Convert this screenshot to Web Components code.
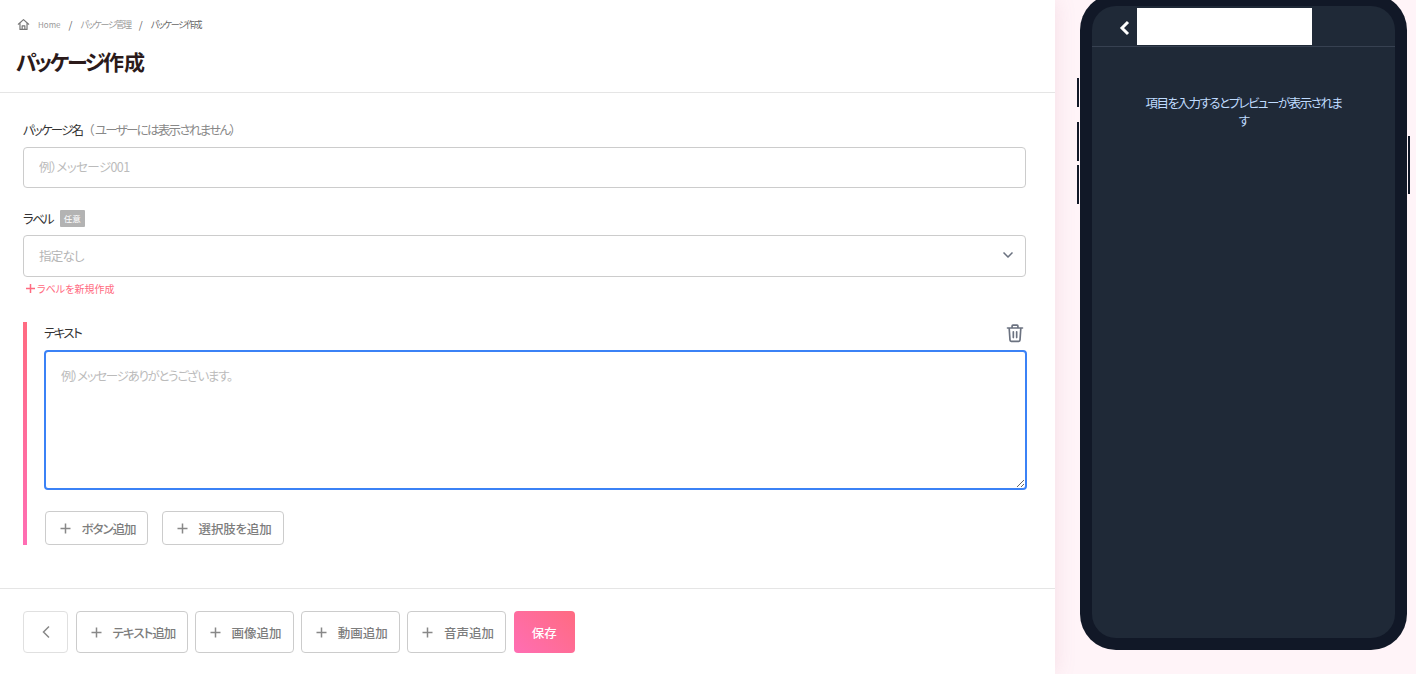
<!DOCTYPE html>
<html lang="ja">
<head>
<meta charset="utf-8">
<title>パッケージ作成</title>
<style>
  html, body { margin: 0; height: 100%; overflow: hidden; }
  body {
    font-family: "Noto Sans CJK JP", "Noto Sans", sans-serif;
    font-feature-settings: "palt";
    color: #333;
    background: #fff;
  }
</style>
</head>
<body>
<package-page></package-page>

<script>
const PLUS = `<svg width="11" height="11" viewBox="0 0 11 11" fill="none" stroke="currentColor" stroke-width="1.5"><path d="M5.5 .5v10M.5 5.500h10"/></svg>`;

class AddButton extends HTMLElement {
  constructor() {
    super();
    this.attachShadow({ mode: "open" }).innerHTML = `<style>
      :host { display: inline-flex; }
      button {
        display: flex;
        align-items: center;
        box-sizing: border-box;
        height: var(--btn-height, 42px);
        padding: 0 11.5px 0 14px;
        gap: 10.5px;
        background: #fff;
        border: 1px solid #ccc;
        border-radius: 4px;
        color: #7d7d7d;
        font: inherit;
        font-size: 12.5px;
        font-weight: 500;
        font-feature-settings: "palt";
        letter-spacing: var(--btn-spacing, 0);
        white-space: nowrap;
      }
      svg { flex: none; color: #888; }
    </style><button type="button">${PLUS}<slot></slot></button>`;
  }
}
customElements.define("add-button", AddButton);

class BreadCrumb extends HTMLElement {
  constructor() {
    super();
    this.attachShadow({ mode: "open" }).innerHTML = `<style>
      :host { display: flex; align-items: center; height: 16px; font-size: 9px; color: #999; }
      svg { margin: 0 8px 0 1px; }
      .home { font-size: 8px; }
      .sep { margin: 0 8px; color: #666; font-size: 10px; }
      .kana { letter-spacing: -1.3px; }
      .current { color: #666; }
    </style>
    <svg width="13" height="13" viewBox="0 0 24 24" fill="none" stroke="#777" stroke-width="2.2" stroke-linejoin="round" stroke-linecap="round"><path d="M2.500 11.500 12 3l9.500 8.500M5.500 9v12h13V9M9.500 21v-6.500h5V21"/></svg>
    <span class="home">Home</span><span class="sep">/</span><span class="kana">パッケージ管理</span><span class="sep">/</span><span class="kana current">パッケージ作成</span>`;
  }
}
customElements.define("bread-crumb", BreadCrumb);

class FormField extends HTMLElement {
  constructor() {
    super();
    this.attachShadow({ mode: "open" }).innerHTML = `<style>
      :host { display: block; }
      .label { display: flex; align-items: center; height: 20px; font-size: 12.5px; color: #333; }
      .note { color: #888; }
      .tag { box-sizing: border-box; width: 25px; margin-left: 7px; height: 17px; line-height: 17px; text-align: center; border-radius: 1px; background: #b3b3b3; color: #fff; font-size: 8.5px; }
      .control { margin-top: var(--control-gap, 8px); }
    </style>
    <div class="label"><slot name="label"></slot><span class="note"><slot name="note"></slot></span></div>
    <div class="control"><slot></slot></div>`;
    if (this.hasAttribute("optional")) {
      const tag = document.createElement("span");
      tag.className = "tag";
      tag.textContent = "任意";
      this.shadowRoot.querySelector(".label").appendChild(tag);
    }
  }
}
customElements.define("form-field", FormField);

class TextInput extends HTMLElement {
  constructor() {
    super();
    this.attachShadow({ mode: "open" }).innerHTML = `<style>
      :host { display: block; }
      input {
        display: block; box-sizing: border-box; width: 100%; height: 41px;
        padding: 0 15px 2px; border: 1px solid #ccc; border-radius: 4px; outline: 0;
        font: inherit; font-size: 12.5px; font-feature-settings: "palt"; letter-spacing: -.6px;
      }
      input::placeholder { color: #bbb; opacity: 1; }
    </style><input type="text" placeholder="${this.getAttribute("placeholder") || ""}">`;
  }
}
customElements.define("text-input", TextInput);

class SelectInput extends HTMLElement {
  constructor() {
    super();
    this.attachShadow({ mode: "open" }).innerHTML = `<style>
      :host { display: block; }
      .box {
        display: flex; align-items: center; justify-content: space-between; box-sizing: border-box;
        height: 42px; padding: 0 12px 2px 15px; border: 1px solid #ccc; border-radius: 4px;
        color: #b5b5b5; font-size: 12.5px; letter-spacing: -.8px;
      }
    </style>
    <div class="box"><slot></slot>
      <svg width="10" height="6" viewBox="0 0 10 6" fill="none" stroke="#6b7280" stroke-width="1.500"><path d="M.5 .5 5 5 9.500 .5"/></svg>
    </div>`;
  }
}
customElements.define("select-input", SelectInput);

class TextBlock extends HTMLElement {
  constructor() {
    super();
    this.attachShadow({ mode: "open" }).innerHTML = `<style>
      :host {
        display: block; box-sizing: border-box; height: 223px;
        padding-left: 17px; border-left: 4px solid;
        border-image: linear-gradient(180deg, #ff6b81, #ff6eb4) 1;
      }
      .head { display: flex; align-items: center; justify-content: space-between; box-sizing: border-box; height: 22px; padding-bottom: 2px; margin-bottom: 6px; font-size: 12.5px; color: #333; letter-spacing: -1.6px; }
      textarea {
        display: block; box-sizing: border-box; width: 983px; height: 140px; padding: 14px 15px;
        border: 2px solid #3b82f6; border-radius: 4px; outline: 0; resize: vertical;
        font: inherit; font-size: 12.5px; font-feature-settings: "palt"; letter-spacing: -1.3px;
      }
      textarea::placeholder { color: #bbb; opacity: 1; }
      .actions { display: flex; gap: 14px; margin: 21px 0 0 1px; --btn-height: 34px; }
      .actions add-button:first-child { --btn-spacing: -1px; }
      .actions add-button:last-child { --btn-spacing: -.2px; }
      svg.trash { margin: 2px 1px 0 0; }
    </style>
    <div class="head"><span>テキスト</span>
      <svg class="trash" width="20" height="20" viewBox="0 0 24 24" fill="none" stroke="#6b7280" stroke-width="2" stroke-linecap="round" stroke-linejoin="round"><path d="M3 6h18M8.500 6V3.500a1 1 0 0 1 1-1h5a1 1 0 0 1 1 1V6M5 6l1 14.500a1.500 1.500 0 0 0 1.500 1.500h9a1.500 1.500 0 0 0 1.500-1.500L19 6M10 10.500v7M14 10.500v7"/></svg>
    </div>
    <textarea placeholder="例）メッセージありがとうございます。"></textarea>
    <div class="actions"><add-button>ボタン追加</add-button><add-button>選択肢を追加</add-button></div>`;
  }
}
customElements.define("text-block", TextBlock);

class PhonePreview extends HTMLElement {
  constructor() {
    super();
    this.attachShadow({ mode: "open" }).innerHTML = `<style>
      :host {
        display: block; position: relative; box-sizing: border-box; width: 327px; height: 656px;
        margin: -6px 0 0 25px; padding: 12px; background: #111827; border-radius: 36px;
      }
      .screen { display: flex; flex-direction: column; height: 100%; background: #1f2937; border-radius: 24px; overflow: hidden; }
      .bar { display: flex; align-items: flex-end; flex: none; box-sizing: border-box; height: 41px; padding: 0 0 1px 27px; border-bottom: 1px solid #374151; }
      .bar svg { flex: none; margin: 0 7px 9px 0; }
      .title { width: 175px; height: 37px; background: #fff; }
      .message { margin: 47px 50px 0; text-align: center; font-size: 12.5px; line-height: 18px; letter-spacing: -1.5px; color: #bfdbfe; }
      i { position: absolute; width: 2px; background: #111827; }
      .l1 { left: -3px; top: 84px; height: 29px; }
      .l2 { left: -3px; top: 128px; height: 39px; }
      .l3 { left: -3px; top: 171px; height: 39px; }
      .r1 { right: -3px; top: 142px; height: 58px; }
    </style>
    <i class="l1"></i><i class="l2"></i><i class="l3"></i><i class="r1"></i>
    <div class="screen">
      <div class="bar">
        <svg width="11" height="16" viewBox="0 0 11 16" fill="none" stroke="#fff" stroke-width="3"><path d="M9 2 3 8l6 6"/></svg>
        <div class="title"></div>
      </div>
      <div class="message"><slot></slot></div>
    </div>`;
  }
}
customElements.define("phone-preview", PhonePreview);

class PackagePage extends HTMLElement {
  constructor() {
    super();
    this.attachShadow({ mode: "open" }).innerHTML = `<style>
      :host { display: flex; height: 674px; background: #fff4f8; overflow: hidden; }
      .main { display: flex; flex-direction: column; flex: none; width: 1055px; background: #fff; box-shadow: 0 0 20px rgba(190, 100, 130, .15); }
      header { flex: none; box-sizing: border-box; height: 93px; padding: 16px 16px 0; border-bottom: 1px solid #e5e5e5; }
      h1 { margin: 13px 0 0; font-size: 21px; line-height: 32px; font-weight: 700; color: #2b1a1a; }
      h1 span { letter-spacing: -2.4px; }
      .form { flex: 1; padding: 26px 29px 0 23px; }
      .k { letter-spacing: -1.8px; }
      .note { letter-spacing: -1.7px; }
      .fw { font-feature-settings: normal; letter-spacing: 0; }
      .gap-label { margin-top: 20px; --control-gap: 7px; }
      .new-label { display: flex; align-items: center; gap: 2px; height: 16px; margin: 3px 0 0 3px; font-size: 10px; color: #ff6b81; }
      text-block { margin-top: 26px; }
      footer { display: flex; flex: none; box-sizing: border-box; height: 86px; padding: 22px 23px 0; gap: 7.2px; border-top: 1px solid #e5e5e5; }
      .back { display: flex; align-items: center; justify-content: center; box-sizing: border-box; width: 45px; height: 42px; margin-right: .8px; border: 1px solid #e0e0e0; border-radius: 4px; background: #fff; }
      .save { box-sizing: border-box; width: 61px; height: 42px; border: 0; border-radius: 4px; background: linear-gradient(45deg, #ff6eb4, #ff6b81); color: #fff; font: inherit; font-size: 12.5px; font-weight: 500; font-feature-settings: "palt"; }
      .tight { --btn-spacing: -.95px; }
    </style>
    <section class="main">
      <header>
        <bread-crumb></bread-crumb>
        <h1><span>パッケージ</span>作成</h1>
      </header>
      <div class="form">
        <form-field>
          <span slot="label" class="k">パッケージ名</span><span slot="note" class="note"><span class="fw">（</span>ユーザーには表示されません<span class="fw">）</span></span>
          <text-input placeholder="例）メッセージ001"></text-input>
        </form-field>
        <form-field class="gap-label" optional>
          <span slot="label" class="k">ラベル</span>
          <select-input>指定なし</select-input>
        </form-field>
        <div class="new-label"><svg width="9" height="9" viewBox="0 0 9 9" fill="none" stroke="currentColor" stroke-width="1.500"><path d="M4.500 0v9M0 4.500h9"/></svg><span>ラベルを新規作成</span></div>
        <text-block></text-block>
      </div>
      <footer>
        <button class="back" type="button" aria-label="戻る"><svg width="10" height="14" viewBox="0 0 10 14" fill="none" stroke="#888" stroke-width="1.500"><path d="M8 1.500 2.500 7 8 12.500"/></svg></button>
        <add-button class="tight">テキスト追加</add-button>
        <add-button>画像追加</add-button>
        <add-button>動画追加</add-button>
        <add-button>音声追加</add-button>
        <button class="save" type="button">保存</button>
      </footer>
    </section>
    <phone-preview>項目を入力するとプレビューが表示されます</phone-preview>`;
  }
}
customElements.define("package-page", PackagePage);
</script>
</body>
</html>
